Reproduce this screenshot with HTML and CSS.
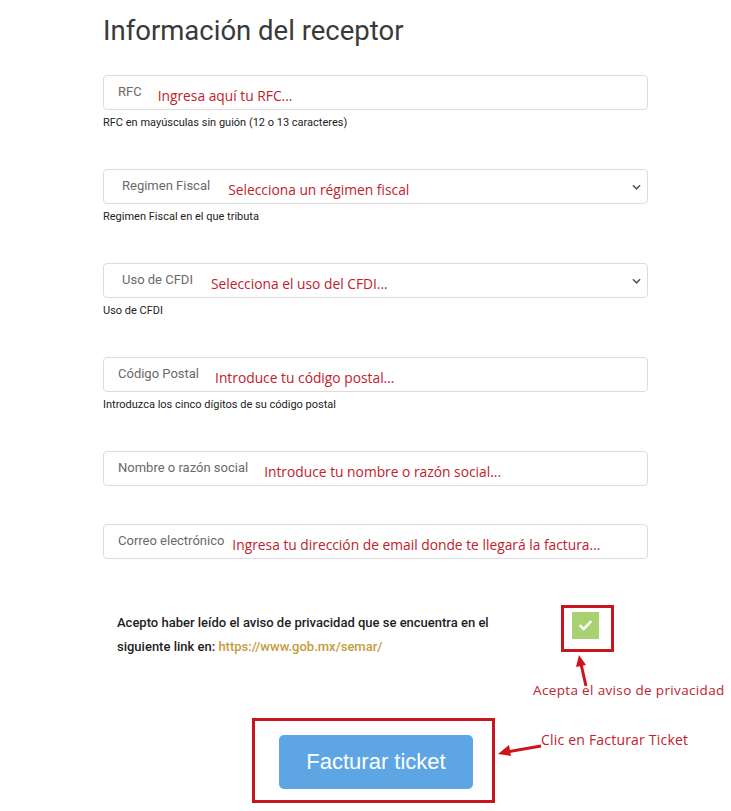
FILE: index.html
```html
<!DOCTYPE html>
<html lang="es">
<head>
<meta charset="utf-8">
<title>Información del receptor</title>
<link rel="stylesheet" href="styles.css">
</head>
<body>
<main class="page">
  <h1 class="title">Información del receptor</h1>

  <div class="group">
    <div class="field"><span class="label">RFC</span><span class="hint">Ingresa aquí tu RFC...</span></div>
    <p class="help">RFC en mayúsculas sin guión (12 o 13 caracteres)</p>
  </div>

  <div class="group">
    <div class="field select"><span class="label">Regimen Fiscal</span><span class="hint">Selecciona un régimen fiscal</span>
      <svg class="chev" viewBox="0 0 10 6" width="9" height="6"><path d="M1 1l4 4 4-4" fill="none" stroke="#555" stroke-width="1.7"/></svg>
    </div>
    <p class="help">Regimen Fiscal en el que tributa</p>
  </div>

  <div class="group">
    <div class="field select"><span class="label">Uso de CFDI</span><span class="hint">Selecciona el uso del CFDI...</span>
      <svg class="chev" viewBox="0 0 10 6" width="9" height="6"><path d="M1 1l4 4 4-4" fill="none" stroke="#555" stroke-width="1.7"/></svg>
    </div>
    <p class="help">Uso de CFDI</p>
  </div>

  <div class="group">
    <div class="field"><span class="label">Código Postal</span><span class="hint">Introduce tu código postal...</span></div>
    <p class="help">Introduzca los cinco dígitos de su código postal</p>
  </div>

  <div class="group">
    <div class="field"><span class="label">Nombre o razón social</span><span class="hint">Introduce tu nombre o razón social...</span></div>
  </div>

  <div class="group">
    <div class="field"><span class="label">Correo electrónico</span><span class="hint tight">Ingresa tu dirección de email donde te llegará la factura...</span></div>
  </div>

  <div class="consent">
    <p class="consent-text">Acepto haber leído el aviso de privacidad que se encuentra en el<br>siguiente link en: <a class="link" href="#">https://www.gob.mx/semar/</a></p>
    <div class="mark-box">
      <span class="check">
        <svg viewBox="0 0 14 12" width="13" height="11"><path d="M1.5 6.5l3.5 3.5 7.5-8" fill="none" stroke="#fff" stroke-width="2.8" stroke-linecap="round" stroke-linejoin="round"/></svg>
      </span>
    </div>
    <svg class="arrow-up" viewBox="0 0 20 32" width="20" height="32"><path d="M13 31L8 9" stroke="#d0121b" stroke-width="3" fill="none"/><path d="M6 0l-3 12 10-2z" fill="#d0121b"/></svg>
    <span class="note note-accept">Acepta el aviso de privacidad</span>
  </div>

  <div class="submit-area">
    <div class="btn-box">
      <button class="btn" type="button">Facturar ticket</button>
    </div>
    <svg class="arrow-left" viewBox="0 0 44 14" width="44" height="14"><path d="M43 3L9 9" stroke="#d0121b" stroke-width="3" fill="none"/><path d="M0 11l11-9 2 11z" fill="#d0121b"/></svg>
    <span class="note note-click">Clic en Facturar Ticket</span>
  </div>
</main>
</body>
</html>
```

FILE: styles.css
```css
* { box-sizing: border-box; }
html, body { margin: 0; padding: 0; background: #fff; }
body { font-family: Roboto, "Liberation Sans", Arial, sans-serif; color: #222; }

.page {
  padding: 14px 0 0 103px;
  width: 648px;
}

.title {
  margin: 0 0 27px;
  font-weight: 400;
  font-size: 27.5px;
  line-height: 34px;
  color: #3a3a3a;
}

.group { margin-bottom: 38px; }
.group:last-of-type { margin-bottom: 0; }

.field {
  position: relative;
  height: 35px;
  border: 1px solid #dcdcdc;
  border-radius: 4px;
  display: flex;
  align-items: center;
  padding-left: 14px;
  gap: 16px;
}
.field.select { padding-left: 18px; gap: 18px; }

.label {
  font-size: 13px;
  color: #6a6a6a;
  margin-top: -2px;
}

.hint {
  font-family: "Open Sans", Lato, sans-serif;
  font-size: 13.8px;
  color: #c0222c;
  margin-top: 6px;
}
.hint.tight { margin-left: -8px; }

.chev { position: absolute; right: 6px; top: 14px; }

.help {
  margin: 5px 0 0;
  font-size: 11px;
  line-height: 16px;
  color: #222;
}

.consent {
  position: relative;
  display: flex;
  margin-top: 46px;
  height: 113px;
}
.consent-text {
  margin: 6px 0 0 14px;
  width: 444px;
  font-size: 13px;
  font-weight: 500;
  line-height: 24px;
  color: #1e1e1e;
}
.link { color: #c49d3c; text-decoration: none; }

.mark-box {
  width: 53px;
  height: 47px;
  border: 3px solid #c8161e;
  display: flex;
  justify-content: center;
  padding: 4px 4px 0 0;
}
.check {
  width: 27px;
  height: 27px;
  background: #a8d172;
  display: flex;
  align-items: center;
  justify-content: center;
}

.arrow-up { position: absolute; left: 470px; top: 50px; }
.note {
  position: absolute;
  font-family: "Open Sans", Lato, sans-serif;
  color: #c0222c;
  white-space: nowrap;
}
.note-accept { left: 430px; top: 76px; font-size: 13.5px; letter-spacing: 0.35px; }

.submit-area {
  position: relative;
  height: 90px;
}
.btn-box {
  margin-left: 149px;
  width: 243px;
  height: 85px;
  border: 3px solid #c8161e;
  padding: 14px 0 0 24px;
}
.btn {
  width: 194px;
  height: 54px;
  border: 0;
  border-radius: 5px;
  background: #5ea6e3;
  color: #fff;
  font-family: "Liberation Sans", Arial, sans-serif;
  font-size: 22px;
  cursor: pointer;
}
.arrow-left { position: absolute; left: 395px; top: 25px; }
.note-click { left: 438px; top: 12px; font-size: 14px; letter-spacing: 0.2px; }
```
